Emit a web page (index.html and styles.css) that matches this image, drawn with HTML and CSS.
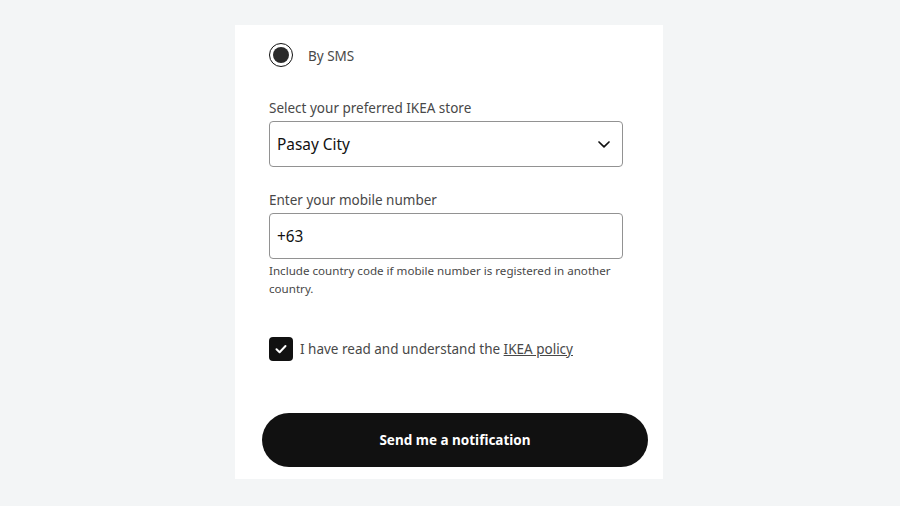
FILE: index.html
```html
<!DOCTYPE html>
<html>
<head>
<meta charset="utf-8">
<link rel="stylesheet" href="styles.css">
</head>
<body>
<div class="card">
  <div class="radio-row">
    <span class="radio"><span class="dot"></span></span>
    <span class="radio-label">By SMS</span>
  </div>
  <div class="field store">
    <label class="label">Select your preferred IKEA store</label>
    <div class="box">
      <span class="value">Pasay City</span>
      <svg class="chev" width="16" height="16" viewBox="0 0 16 16"><path d="M3 6 L8 10.8 L13 6" fill="none" stroke="#111" stroke-width="1.7" stroke-linecap="round" stroke-linejoin="round"/></svg>
    </div>
  </div>
  <div class="field mobile">
    <label class="label">Enter your mobile number</label>
    <div class="box">
      <span class="value">+63</span>
    </div>
    <p class="help">Include country code if mobile number is registered in another country.</p>
  </div>
  <div class="check-row">
    <span class="checkbox"><svg width="14" height="14" viewBox="0 0 14 14"><path d="M2.5 7.3 L5.6 10.2 L11.5 4" fill="none" stroke="#fff" stroke-width="2" stroke-linecap="round" stroke-linejoin="round"/></svg></span>
    <span class="check-label">I have read and understand the <a class="link">IKEA policy</a></span>
  </div>
  <button class="btn">Send me a notification</button>
</div>
</body>
</html>
```
FILE: styles.css
```css
* { box-sizing: border-box; }
html, body { margin: 0; padding: 0; }
body {
  background: #f3f5f6;
  font-family: "Noto Sans", "Open Sans", sans-serif;
  width: 900px;
  height: 506px;
  overflow: hidden;
}
.card {
  margin: 25px 0 0 235px;
  width: 428px;
  height: 454px;
  background: #fff;
  padding: 18px 40px 0 34px;
  display: flex;
  flex-direction: column;
}
.radio-row {
  display: flex;
  align-items: center;
  gap: 15px;
  height: 24px;
}
.radio {
  width: 24px;
  height: 24px;
  border-radius: 50%;
  border: 1.5px solid #111;
  display: flex;
  align-items: center;
  justify-content: center;
}
.dot {
  width: 16px;
  height: 16px;
  border-radius: 50%;
  background: #2a2a2a;
}
.radio-label {
  font-size: 13.5px;
  color: #484848;
  line-height: 20px;
  padding-top: 2px;
}
.field { display: flex; flex-direction: column; }
.store { margin-top: 31px; }
.mobile { margin-top: 23px; }
.label {
  font-size: 13.5px;
  line-height: 20px;
  color: #484848;
  margin-bottom: 3px;
}
.box {
  height: 46px;
  border: 1px solid #929292;
  border-radius: 4px;
  display: flex;
  align-items: center;
  justify-content: space-between;
  padding: 0 10px 0 7px;
}
.value {
  font-size: 15.4px;
  color: #111;
}
.chev { display: block; }
.help {
  margin: 3px 0 0 0;
  font-size: 11.6px;
  line-height: 18px;
  color: #484848;
}
.check-row {
  margin-top: 39px;
  display: flex;
  align-items: center;
  gap: 7px;
}
.checkbox {
  width: 24px;
  height: 24px;
  border-radius: 4px;
  background: #111;
  display: flex;
  align-items: center;
  justify-content: center;
}
.checkbox svg { display: block; }
.check-label {
  font-size: 13.5px;
  line-height: 20px;
  color: #484848;
}
.link {
  color: #484848;
  text-decoration: underline;
}
.btn {
  margin: 52px 0 0 -7px;
  width: 386px;
  height: 54px;
  border: none;
  border-radius: 27px;
  background: #111;
  color: #fff;
  font-family: "Noto Sans", "Open Sans", sans-serif;
  font-weight: 700;
  font-size: 13.5px;
  padding: 0;
}
```
